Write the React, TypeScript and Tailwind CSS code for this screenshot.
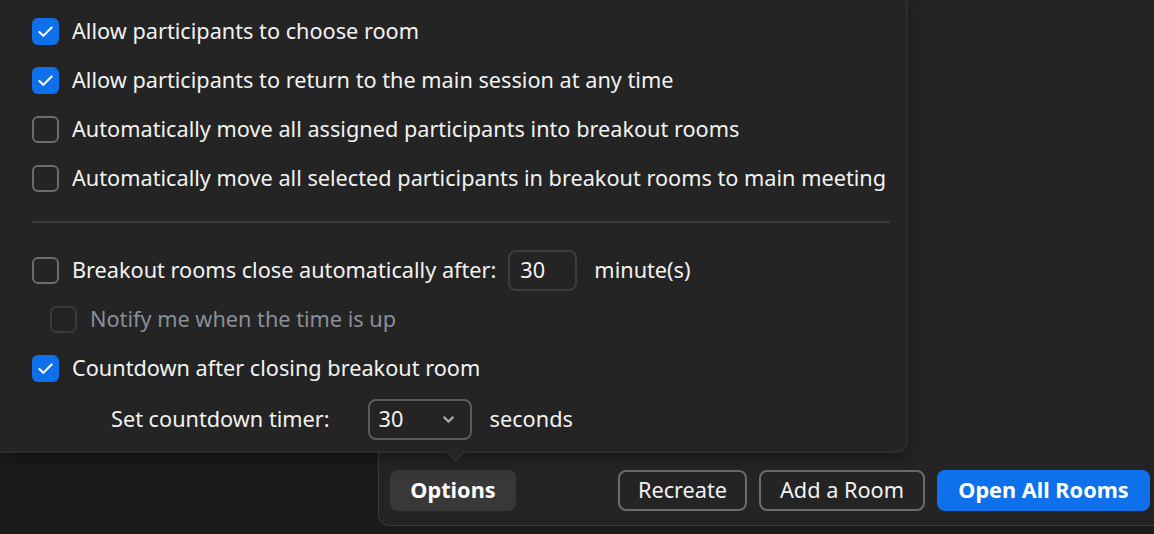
import React from 'react';

const FONT = { fontFamily: '"Noto Sans", "Open Sans", sans-serif' };

const Check: React.FC<{ checked?: boolean; dim?: boolean }> = ({ checked, dim }) => {
  if (checked) {
    return (
      <span className="w-[27px] h-[27px] rounded-[6px] bg-[#0e71eb] flex items-center justify-center shrink-0">
        <svg width="21" height="21" viewBox="0 0 24 24" fill="none" stroke="#fff" strokeWidth={2.4} strokeLinecap="round" strokeLinejoin="round">
          <path d="M5 12.5l4.5 4.5L19 7.5" />
        </svg>
      </span>
    );
  }
  return (
    <span
      className={`w-[27px] h-[27px] rounded-[6px] border-2 shrink-0 ${dim ? 'border-[#3a3a3a]' : 'border-[#6b6b6b]'}`}
    />
  );
};

const Row: React.FC<{ children: React.ReactNode; className?: string }> = ({ children, className = '' }) => (
  <div className={`h-[49px] flex items-center ${className}`}>{children}</div>
);

export default function App() {
  return (
    <div className="relative w-[1154px] h-[534px] overflow-hidden bg-[#1b1b1b] text-[21.7px] text-[#f2f2f2]" style={FONT}>
      {/* breakout rooms window behind */}
      <div className="absolute left-[378px] top-[-20px] right-[-1px] bottom-[8px] bg-[#242424] border-l border-b border-[#3a3a3a] rounded-bl-[12px] flex items-end pl-[11px] pr-[5px] pb-[14px]">
        <div className="flex items-center w-full">
          <button className="w-[126px] h-[41px] rounded-[8px] bg-[#383838] font-bold text-white">Options</button>
          <div className="ml-auto flex items-center gap-[12px]">
            <button className="w-[129px] h-[41px] rounded-[8px] border-2 border-[#6b6b6b] text-[#f2f2f2]">Recreate</button>
            <button className="w-[166px] h-[41px] rounded-[8px] border-2 border-[#6b6b6b] text-[#f2f2f2]">Add a Room</button>
            <button className="w-[213px] h-[41px] rounded-[8px] bg-[#0e71eb] font-bold text-white">Open All Rooms</button>
          </div>
        </div>
      </div>

      {/* options popup */}
      <div className="absolute left-0 top-0 w-[908px] h-[453px] bg-[#242424] border-r-2 border-b-2 border-[#2d2d2d] rounded-br-[12px] shadow-[0_6px_16px_rgba(0,0,0,0.35)] pl-[32px] pr-[16px] pt-[7px] flex flex-col">
        <Row>
          <Check checked />
          <span className="ml-[13px]">Allow participants to choose room</span>
        </Row>
        <Row>
          <Check checked />
          <span className="ml-[13px]">Allow participants to return to the main session at any time</span>
        </Row>
        <Row>
          <Check />
          <span className="ml-[13px]">Automatically move all assigned participants into breakout rooms</span>
        </Row>
        <Row>
          <Check />
          <span className="ml-[13px]">Automatically move all selected participants in breakout rooms to main meeting</span>
        </Row>

        <div className="mt-[18px] mb-[23px] h-[2px] bg-[#3a3a3a]" />

        <Row>
          <Check />
          <span className="ml-[13px]">Breakout rooms close automatically after:</span>
          <div className="ml-[12px] w-[69px] h-[41px] rounded-[8px] border-2 border-[#3d3d3d] flex items-center pl-[10px]">30</div>
          <span className="ml-[17px]">minute(s)</span>
        </Row>
        <Row className="pl-[18px]">
          <Check dim />
          <span className="ml-[13px] text-[#8a8f98]">Notify me when the time is up</span>
        </Row>
        <Row>
          <Check checked />
          <span className="ml-[13px]">Countdown after closing breakout room</span>
        </Row>
        <Row className="pl-[79px] pt-[3px]">
          <span>Set countdown timer:</span>
          <div className="ml-[38px] w-[104px] h-[41px] rounded-[8px] border-2 border-[#5a5a5a] flex items-center pl-[9px] pr-[13px]">
            <span>30</span>
            <svg className="ml-auto" width="17" height="17" viewBox="0 0 24 24" fill="none" stroke="#a8a8a8" strokeWidth={3} strokeLinecap="round" strokeLinejoin="round">
              <path d="M6 9l6 6 6-6" />
            </svg>
          </div>
          <span className="ml-[18px]">seconds</span>
        </Row>

        {/* pointer arrow toward Options */}
        <span className="absolute left-[449px] bottom-[-8px] w-[13px] h-[13px] rotate-45 bg-[#242424] border-r-2 border-b-2 border-[#2d2d2d]" />
      </div>
    </div>
  );
}
